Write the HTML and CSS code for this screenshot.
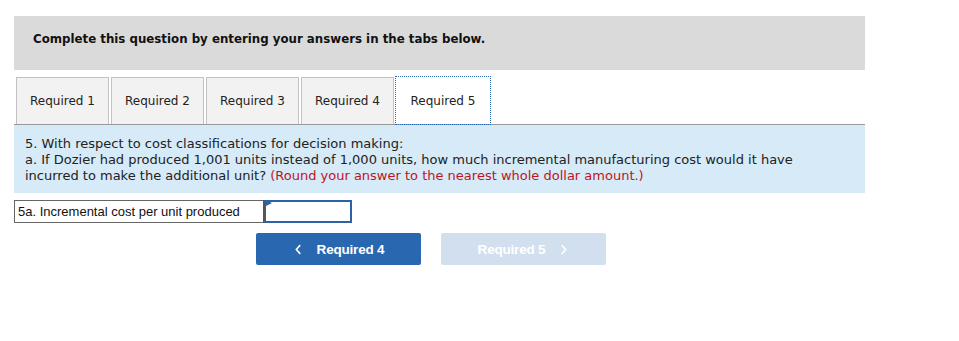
FILE: index.html
```html
<!DOCTYPE html>
<html>
<head>
    <link rel="stylesheet" href="styles.css">
</head>

<body>
    <div class="container">
        <div class="header">Complete this question by entering your answers in the tabs below.</div>

        <div class="tabs">
            <div class="tab">Required 1</div>
            <div class="tab">Required 2</div>
            <div class="tab">Required 3</div>
            <div class="tab">Required 4</div>
            <div class="tab active">Required 5</div>
        </div>

        <div class="question">
            5. With respect to cost classifications for decision making:<br>
            a. If Dozier had produced 1,001 units instead of 1,000 units, how much incremental manufacturing cost would it have
            incurred to make the additional unit? <span class="hint">(Round your answer to the nearest whole dollar amount.)</span>
        </div>

        <div class="answer-row">
            <div class="answer-label">5a. Incremental cost per unit produced</div>
            <div class="answer-input"><span class="flag"></span></div>
        </div>

        <div class="nav">
            <button class="nav-btn prev">
                <svg viewBox="0 0 8 12" fill="none" stroke="currentColor" stroke-width="1.8">
                    <polyline points="6,1 1.5,6 6,11"></polyline>
                </svg>
                Required 4
            </button>
            <button class="nav-btn next" disabled>
                Required 5
                <svg viewBox="0 0 8 12" fill="none" stroke="currentColor" stroke-width="1.8">
                    <polyline points="2,1 6.5,6 2,11"></polyline>
                </svg>
            </button>
        </div>
    </div>
</body>
</html>
```

FILE: styles.css
```css
body {
    margin: 0;
    background: #fff;
    color: #222;
    font-family: "DejaVu Sans", Verdana, sans-serif;
}

.container {
    width: 851px;
    padding: 16px 0 0 14px;
}

.header {
    height: 54px;
    box-sizing: border-box;
    padding: 16px 0 0 19px;
    background: #dadada;
    font-size: 11.8px;
    font-weight: bold;
    line-height: 15px;
    color: #111;
}

.tabs {
    display: flex;
    gap: 2px;
    margin-top: 7px;
    padding-left: 2px;
    border-bottom: 1px solid #999;
}

.tab {
    width: 93px;
    height: 47px;
    box-sizing: border-box;
    display: flex;
    align-items: center;
    justify-content: center;
    background: #f2f2f2;
    border: 1px solid #c2c2c2;
    border-bottom: none;
    font-size: 12px;
    color: #222;
}

.tab.active {
    width: 94px;
    background: #fff;
    border-color: #fff;
    outline: 1px dotted #2a67b1;
    outline-offset: 0;
}

/* question text wraps just after "have" */
.question {
    height: 68px;
    box-sizing: border-box;
    padding: 11px 40px 0 11px;
    background: #d6eaf8;
    font-size: 13px;
    line-height: 16px;
    color: #222;
}

.hint {
    color: #c0141c;
}

.answer-row {
    display: flex;
    margin-top: 7px;
    height: 23px;
}

.answer-label {
    width: 249px;
    box-sizing: border-box;
    padding-left: 3px;
    border: 1px solid #666;
    border-right: none;
    font-family: "Liberation Sans", Arial, sans-serif;
    font-size: 13px;
    line-height: 21px;
    color: #111;
}

.answer-input {
    position: relative;
    width: 89px;
    box-sizing: border-box;
    border: 2px solid #2d62a8;
    border-left: 2px solid #555;
    box-shadow: inset 1px 0 0 #2d62a8;
}

.flag {
    position: absolute;
    top: 0;
    left: 1px;
    width: 0;
    height: 0;
    border-top: 3px solid transparent;
    border-bottom: 3px solid transparent;
    border-left: 6px solid #2d62a8;
    transform: translateY(-2px);
}

.nav {
    display: flex;
    gap: 20px;
    margin: 10px 0 0 242px;
}

.nav-btn {
    width: 165px;
    height: 32px;
    display: flex;
    align-items: center;
    justify-content: center;
    gap: 15px;
    border: none;
    border-radius: 2px;
    color: #fff;
    font-family: "Liberation Sans", Arial, sans-serif;
    font-size: 13.5px;
    font-weight: bold;
    letter-spacing: -0.2px;
}

.nav-btn svg {
    width: 7px;
    height: 11px;
}

.prev {
    background: #2a67b1;
    padding-right: 4px;
}

.next {
    background: #d2dfee;
    padding-left: 4px;
}
```
